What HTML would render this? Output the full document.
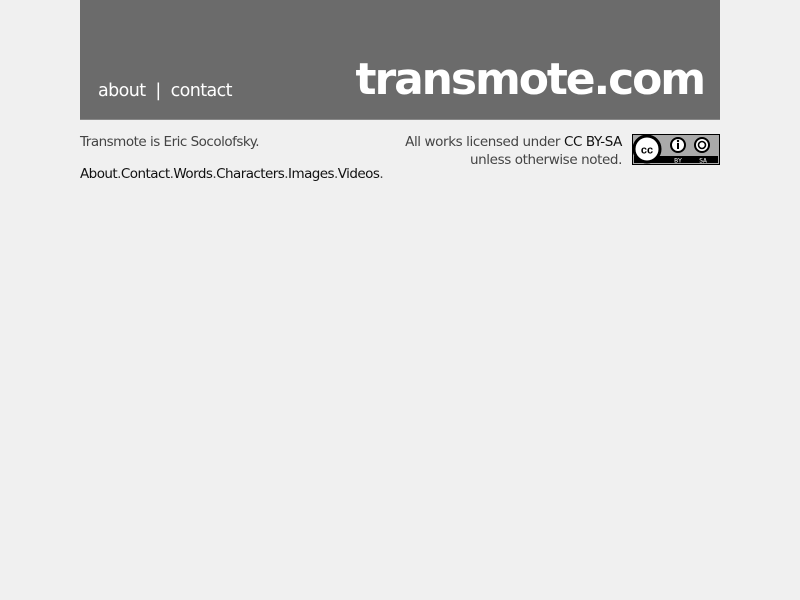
<!DOCTYPE html>
<html><head><meta charset="utf-8"><style>
html,body{margin:0;padding:0;background:#f0f0f0;width:800px;height:600px;overflow:hidden;font-family:"DejaVu Sans","Liberation Sans",sans-serif;}
#hdr{position:absolute;left:80px;top:0;width:640px;height:119px;background:#6b6b6b;border-bottom:1px solid #888;}
#nav{position:absolute;left:18px;top:81px;color:#fff;font-size:17.5px;letter-spacing:-0.6px;}
#title{position:absolute;right:16px;top:52px;color:#fff;font-size:44px;font-weight:bold;letter-spacing:-2.1px;line-height:56px;}
.l{position:absolute;left:80px;font-size:13.5px;color:#444;letter-spacing:-0.5px;}
.r{position:absolute;right:178px;font-size:13.5px;color:#444;text-align:right;letter-spacing:-0.4px;line-height:18px;}
b{color:#111;font-weight:normal;}
</style></head><body>
<div id="hdr"><div id="nav">about &nbsp;|&nbsp; contact</div><div id="title">transmote.com</div></div>
<div class="l" style="top:134px">Transmote is Eric Socolofsky.</div>
<div class="l" style="top:166px;letter-spacing:-0.55px"><b>About</b>.<b>Contact</b>.<b>Words</b>.<b>Characters</b>.<b>Images</b>.<b>Videos</b>.</div>
<div class="r" style="top:133px">All works licensed under <b>CC BY-SA</b><br>unless otherwise noted.</div>
<svg style="position:absolute;left:632px;top:134px" width="88" height="31" viewBox="0 0 88 31">
<rect x="0.5" y="0.5" width="87" height="30" fill="#aaa" stroke="#000"/>
<rect x="2" y="22" width="84" height="7" fill="#000"/>
<circle cx="15" cy="15" r="13" fill="#fff" stroke="#000" stroke-width="3"/>
<text x="15" y="19.5" font-size="11" font-weight="bold" text-anchor="middle" font-family="Liberation Sans">cc</text>
<circle cx="46" cy="11" r="7" fill="#fff" stroke="#000" stroke-width="2"/>
<rect x="45" y="9" width="2" height="6" fill="#000"/><circle cx="46" cy="7" r="1.2" fill="#000"/>
<circle cx="70" cy="11" r="7" fill="#fff" stroke="#000" stroke-width="2"/>
<circle cx="70" cy="11" r="3.5" fill="none" stroke="#000" stroke-width="1.6"/>
<text x="46" y="28.5" font-size="6.5" fill="#fff" text-anchor="middle" font-family="DejaVu Sans Mono">BY</text>
<text x="71" y="28.5" font-size="6.5" fill="#fff" text-anchor="middle" font-family="DejaVu Sans Mono">SA</text>
</svg>
</body></html>
